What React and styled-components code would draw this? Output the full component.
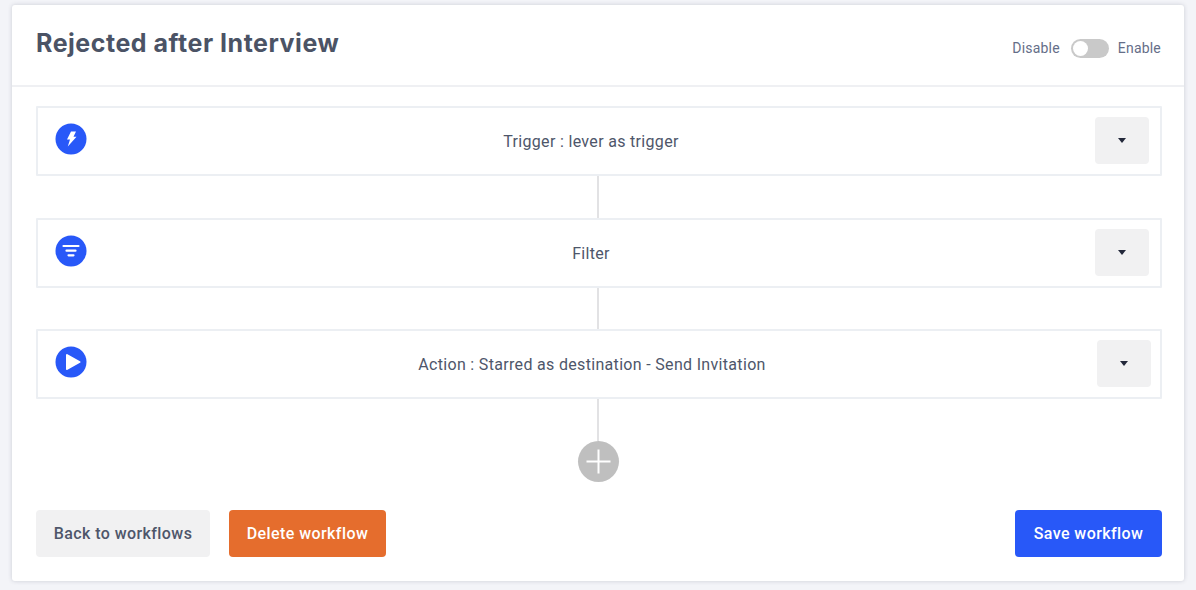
import styled, { createGlobalStyle } from "styled-components";

const GlobalStyle = createGlobalStyle`
  html, body {
    margin: 0;
    padding: 0;
    background: #f3f4f8;
    font-family: "Roboto", "Liberation Sans", sans-serif;
  }
`;

const Page = styled.div`
  width: 1196px;
  height: 590px;
  padding: 5px 12px 9px;
  box-sizing: border-box;
  overflow: hidden;
`;

const Card = styled.section`
  height: 576px;
  display: flex;
  flex-direction: column;
  background: #fff;
  border-radius: 3px;
  box-shadow: 0 0 4px rgba(60, 70, 90, 0.22);
`;

const Header = styled.header`
  height: 80px;
  flex: none;
  display: flex;
  justify-content: space-between;
  padding: 0 23px 0 24px;
  border-bottom: 2px solid #eff0f3;
`;

const Title = styled.h1`
  margin: 22px 0 0;
  font-family: "Inter", "Open Sans", sans-serif;
  font-size: 25px;
  line-height: 32px;
  font-weight: 700;
  letter-spacing: 0.52px;
  color: #4b5365;
`;

const StatusToggle = styled.div`
  display: flex;
  align-items: center;
  gap: 9px;
  height: 20px;
  margin-top: 33px;
  font-size: 14px;
  letter-spacing: 0.2px;
  color: #656e88;
`;

const Track = styled.span`
  position: relative;
  width: 38px;
  height: 19px;
  margin-left: 2px;
  border-radius: 10px;
  background: #c9c9c9;
`;

const Knob = styled.span`
  position: absolute;
  left: 2px;
  top: 2px;
  width: 15px;
  height: 15px;
  border-radius: 50%;
  background: #fff;
`;

const Flow = styled.div`
  flex: 1;
  display: flex;
  flex-direction: column;
  padding: 19px 22px 0 24px;
`;

const Step = styled.div`
  height: 70px;
  flex: none;
  box-sizing: border-box;
  display: flex;
  align-items: center;
  padding: 0 ${(p) => p.$pad}px 0 17px;
  border: 2px solid #eceff3;
  border-radius: 1px;
`;

const StepIcon = styled.span`
  width: 32px;
  height: 32px;
  flex: none;
  margin-top: -1px;
  margin-bottom: 4px;
  display: block;
  svg {
    display: block;
  }
`;

const StepLabel = styled.div`
  flex: 1;
  text-align: center;
  font-size: 16px;
  letter-spacing: 0.32px;
  color: #4e566a;
`;

const Dropdown = styled.button`
  width: 54px;
  height: 47px;
  flex: none;
  margin-top: -1px;
  padding: 0;
  border: 0;
  border-radius: 4px;
  background: #f1f1f2;
  display: flex;
  align-items: center;
  justify-content: center;
`;

const Caret = styled.span`
  width: 0;
  height: 0;
  border-left: 4.5px solid transparent;
  border-right: 4.5px solid transparent;
  border-top: 5px solid #23283a;
`;

const Connector = styled.div`
  width: 2px;
  height: ${(p) => p.$h}px;
  flex: none;
  margin-left: 561px;
  background: #e2e2e4;
`;

const AddStep = styled.button`
  width: 41px;
  height: 41px;
  flex: none;
  margin-left: 542px;
  padding: 0;
  border: 0;
  border-radius: 50%;
  background: #bfbfbf;
  svg {
    display: block;
  }
`;

const Footer = styled.footer`
  display: flex;
  align-items: center;
  gap: 19px;
  margin-top: 28px;
`;

const Action = styled.button`
  height: 47px;
  padding: 0;
  width: ${(p) => p.$w}px;
  margin-left: ${(p) => (p.$push ? "auto" : "0")};
  border: 0;
  border-radius: 4px;
  font-family: inherit;
  font-size: 16px;
  font-weight: 500;
  letter-spacing: 0.42px;
  background: ${(p) => p.$bg};
  color: ${(p) => p.$fg};
`;

const BoltIcon = () => (
  <svg viewBox="0 0 32 32" width="32" height="32">
    <circle cx="16" cy="16" r="15.5" fill="#2858f8" />
    <path d="M16 8.5 H21 L18.5 13.8 H21.5 L12.8 23.5 L15 16.5 H12 Z" fill="#fff" />
  </svg>
);

const FilterIcon = () => (
  <svg viewBox="0 0 32 32" width="32" height="32">
    <circle cx="16" cy="16" r="15.5" fill="#2858f8" />
    <path d="M8.5 11 H23.5 M11.5 15.7 H20.5 M13.5 20.3 H18.5" stroke="#fff" strokeWidth="2.2" strokeLinecap="round" fill="none" />
  </svg>
);

const PlayIcon = () => (
  <svg viewBox="0 0 32 32" width="32" height="32">
    <circle cx="16" cy="16" r="15.5" fill="#2858f8" />
    <path d="M12 9 L24.5 16 L12 23 Z" fill="#fff" stroke="#fff" strokeWidth="2" strokeLinejoin="round" />
  </svg>
);

const steps = [
  { label: "Trigger : lever as trigger", icon: <BoltIcon />, pad: 11, gap: 42 },
  { label: "Filter", icon: <FilterIcon />, pad: 11, gap: 41 },
  { label: "Action : Starred as destination - Send Invitation", icon: <PlayIcon />, pad: 9, gap: 42 },
];

const App = () => {
  return (
    <>
      <GlobalStyle />
      <Page>
        <Card>
          <Header>
            <Title>Rejected after Interview</Title>
            <StatusToggle>
              <span>Disable</span>
              <Track>
                <Knob />
              </Track>
              <span>Enable</span>
            </StatusToggle>
          </Header>
          <Flow>
            {steps.map((step) => (
              <div key={step.label}>
                <Step $pad={step.pad}>
                  <StepIcon>{step.icon}</StepIcon>
                  <StepLabel>{step.label}</StepLabel>
                  <Dropdown aria-label="Expand">
                    <Caret />
                  </Dropdown>
                </Step>
                <Connector $h={step.gap} />
              </div>
            ))}
            <AddStep aria-label="Add step">
              <svg viewBox="0 0 41 41" width="41" height="41">
                <path d="M20.5 8.5 V32.5 M8.5 20.5 H32.5" stroke="#fff" strokeWidth="2" fill="none" />
              </svg>
            </AddStep>
            <Footer>
              <Action $w={174} $bg="#f1f1f2" $fg="#4e566a">Back to workflows</Action>
              <Action $w={157} $bg="#e56d2d" $fg="#fff">Delete workflow</Action>
              <Action $w={147} $bg="#2858f8" $fg="#fff" $push>Save workflow</Action>
            </Footer>
          </Flow>
        </Card>
      </Page>
    </>
  );
};

export default App;
